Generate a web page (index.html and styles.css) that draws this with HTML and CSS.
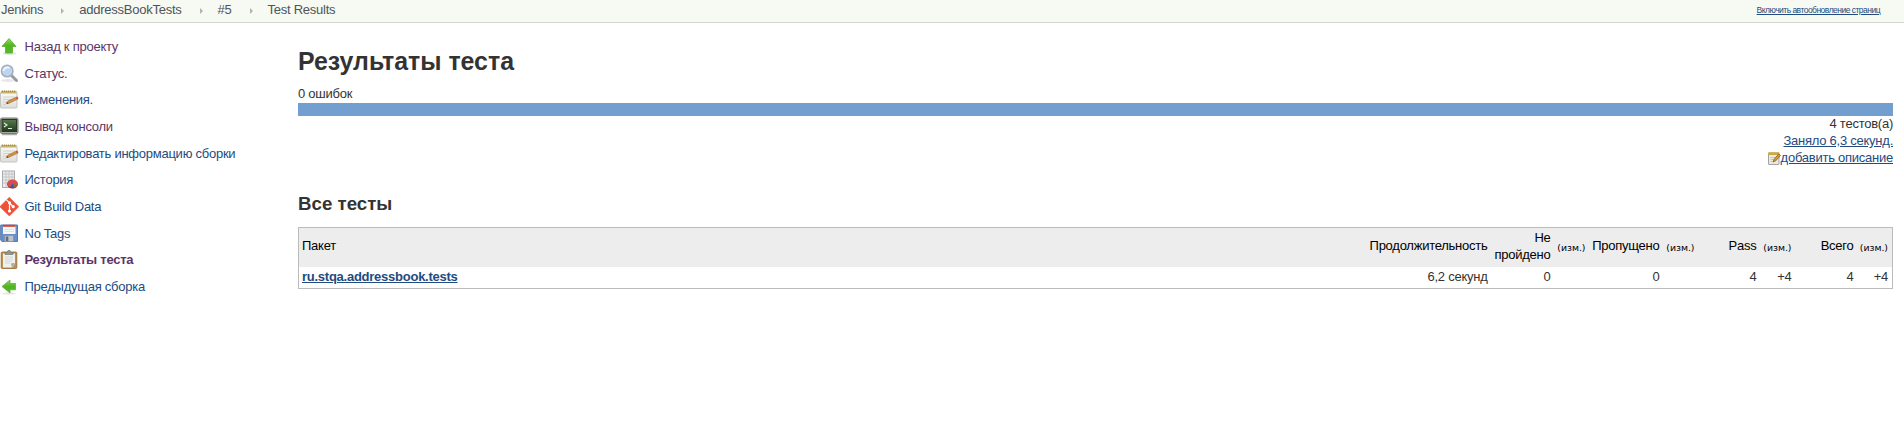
FILE: index.html
```html
<!DOCTYPE html>
<html lang="ru">
<head>
<meta charset="utf-8">
<title>Test Results</title>
<link rel="stylesheet" href="styles.css">
</head>
<body>
<header class="crumbs">
  <nav class="path"><span>Jenkins</span><i></i><span>addressBookTests</span><i></i><span>#5</span><i></i><span>Test Results</span></nav>
  <a class="refresh" href="#">Включить автообновление страниц</a>
</header>
<svg class="defs" width="0" height="0">
  <defs>
    <linearGradient id="green" x2="0" y2="1"><stop stop-color="#8fdc52"/><stop offset=".5" stop-color="#4fb51e"/><stop offset="1" stop-color="#59b92b"/></linearGradient>
    <linearGradient id="screen" x2="0" y2="1"><stop stop-color="#5a7a4c"/><stop offset="1" stop-color="#1f3a1c"/></linearGradient>
    <linearGradient id="paper" x2="0" y2="1"><stop stop-color="#fafaf8"/><stop offset="1" stop-color="#dededb"/></linearGradient>
    <symbol id="note" viewBox="0 0 19 19">
      <rect x=".5" y="2" width="16.500" height="16" rx="1" fill="url(#paper)" stroke="#c4c4c0"/>
      <path d="M1 .8h15.500v2.700H1z" fill="#c9b365"/><path d="M2 1.200h14" stroke="#907b38" stroke-dasharray="1 1"/>
      <path d="M3 7h12M3 9.500h9M3 12h4M3 14.500h3" stroke="#d2d2ce"/>
      <path d="M6.500 13L8 11 16.500 7l1.500 2-9 4.300z" fill="#d39142" stroke="#9f6f3a" stroke-width=".6"/>
      <path d="M15.800 7.300l1.400-.7 1.300 1.700-1.500.9z" fill="#c9564a"/><path d="M6 14l1.500-1.800 1 1.300z" fill="#333"/>
    </symbol>
    <symbol id="edit" viewBox="0 0 13 13">
      <rect x=".5" y="1" width="10.500" height="11.500" rx=".5" fill="#e9e9e6" stroke="#a3a39d"/>
      <path d="M.3.300h11v2.700H.3z" fill="#cfa93c"/>
      <path d="M2.500 5.500h5M2.500 7.500h3M2.500 9.500h2" stroke="#bdbdb8" stroke-width=".8"/>
      <path d="M5 10l1-2.700L10.700 2l1.800 1.500L7.500 9z" fill="#d9992c" stroke="#79531f" stroke-width=".7"/>
    </symbol>
  </defs>
</svg>
<div class="layout">
<aside class="tasks">
  <a class="visited" href="#"><svg viewBox="0 0 19 19"><ellipse cx="9.500" cy="16.500" rx="7" ry="1.500" fill="#e0e5dc"/><path d="M9 1.500L16 9.500h-3.500V16h-7V9.500H2z" fill="url(#green)" stroke="#57ad2b" stroke-width=".8"/></svg><span>Назад к проекту</span></a>
  <a class="visited" href="#"><svg viewBox="0 0 19 19"><ellipse cx="8" cy="16.500" rx="7" ry="1.500" fill="#e7e7e7"/><path d="M11.500 11.500l5 5" stroke="#999ba0" stroke-width="3" stroke-linecap="round"/><circle cx="7.200" cy="7" r="5.800" fill="#bcd5f2" stroke="#a5aebc" stroke-width="1.500"/><path d="M3.500 7a4 4 0 0 1 6-3" stroke="#eef6ff" stroke-width="1.800" fill="none"/></svg><span>Статус.</span></a>
  <a class="raised" href="#"><svg viewBox="0 0 19 19"><use href="#note"/></svg><span>Изменения.</span></a>
  <a class="visited" href="#"><svg viewBox="0 0 19 19"><path d="M2 17.500h15" stroke="#aaa" stroke-width="1.500"/><rect x=".5" y="1" width="17.500" height="15.500" rx="1.500" fill="#a7aaa3" stroke="#777b74"/><rect x="2" y="2.500" width="14.500" height="12" fill="url(#screen)" stroke="#263a23"/><path d="M4 6l3 2-3 2M8 11.500h4" stroke="#e3eee0" fill="none" stroke-width="1.100"/></svg><span>Вывод консоли</span></a>
  <a href="#"><svg viewBox="0 0 19 19"><use href="#note"/></svg><span>Редактировать информацию сборки</span></a>
  <a class="raised" href="#"><svg viewBox="0 0 19 19"><rect x="2.500" y="1" width="12" height="16.500" fill="#ededed" stroke="#aaa"/><path d="M3 4h11M3 7h11M3 10h11M3 13h8M6 1v16M9 1v16M12 1v12" stroke="#bcbcbc" stroke-width=".8"/><ellipse cx="12.500" cy="14.500" rx="5.300" ry="4" fill="#a52c32"/><ellipse cx="12.500" cy="13.500" rx="5.300" ry="4" fill="#df4a4e"/><path d="M12.500 13.500l5.300.5q-.5 3-3.500 4z" fill="#9c6938"/><path d="M12.500 13.500l2 4.500q-2.500.7-4.500-.7z" fill="#315bac"/></svg><span>История</span></a>
  <a href="#"><svg viewBox="0 0 19 19"><path d="M9.300.2L18.800 9.700 9.300 19 -.2 9.700z" fill="#ee5138" stroke="#ee5138" stroke-linejoin="round" stroke-width=".5"/><path d="M6.500 2.800l3 3V14M9.500 6l3.500 3.500" stroke="#fff" stroke-width="1.200" fill="none"/><g fill="#fff"><circle cx="9.500" cy="5.700" r="1.500"/><circle cx="9.500" cy="14" r="1.600"/><circle cx="13.200" cy="9.700" r="1.600"/></g></svg><span>Git Build Data</span></a>
  <a href="#"><svg viewBox="0 0 19 19"><path d="M.7 1h16.800v16.500H2L.7 16z" fill="#688fc9" stroke="#5679b0"/><rect x="3" y="1.500" width="12.500" height="8.500" fill="#f8f8f8"/><path d="M3 .8h12.500v2H3z" fill="#db3e36"/><path d="M4.500 5.500h9.500M4.500 7.500h9.500" stroke="#d8d8d8" stroke-width=".7"/><rect x="4.500" y="11.500" width="9" height="6" fill="#bfc1c2" stroke="#8b9095" stroke-width=".7"/><rect x="5.800" y="12.500" width="2.500" height="4.500" fill="#5a6f8b"/></svg><span>No Tags</span></a>
  <a class="visited current" href="#"><svg viewBox="0 0 19 19"><rect x="1.200" y="2" width="15.600" height="16.500" rx="1" fill="#c0924d" stroke="#8f6933" stroke-width=".8"/><path d="M3 3.500h12v10L12 17.500H3z" fill="#f0f0ee"/><path d="M15 13l-4 .3.800 4.200z" fill="#aaa"/><path d="M5 7h8M5 9h8M5 11h7M5 13h5" stroke="#d0d0d0" stroke-width=".8"/><path d="M5 4.500V2.500h2L8 .5h2l1 2h2v2z" fill="#93968f" stroke="#6d706a" stroke-width=".6"/></svg><span>Результаты теста</span></a>
  <a href="#"><svg viewBox="0 0 19 19"><ellipse cx="9" cy="16.500" rx="7" ry="1.200" fill="#e5e8e2"/><path d="M2 9.500L10 3v3.500h5.500v6.300H10V16z" fill="url(#green)" stroke="#68a750" stroke-width=".8"/></svg><span>Предыдущая сборка</span></a>
</aside>
<main class="main">
  <h1>Результаты теста</h1>
  <div class="failures">0 ошибок</div>
  <div class="bar"></div>
  <div class="summary">
    <div>4 тестов(а)</div>
    <div><a href="#">Заняло 6,3 секунд.</a></div>
    <div class="describe"><svg viewBox="0 0 13 13"><use href="#edit"/></svg><a href="#">добавить описание</a></div>
  </div>
  <h2>Все тесты</h2>
  <table class="results">
    <colgroup><col><col class="w-duration"><col class="w-fail"><col class="w-diff"><col class="w-skip"><col class="w-diff"><col class="w-num"><col class="w-diff"><col class="w-num"><col class="w-diff"></colgroup>
    <thead><tr><th class="name">Пакет</th><th>Продолжительность</th><th>Не пройдено</th><th class="diff">(изм.)</th><th>Пропущено</th><th class="diff">(изм.)</th><th>Pass</th><th class="diff">(изм.)</th><th>Всего</th><th class="diff">(изм.)</th></tr></thead>
    <tbody><tr><td class="name"><a href="#">ru.stqa.addressbook.tests</a></td><td>6,2 секунд</td><td>0</td><td></td><td>0</td><td></td><td>4</td><td>+4</td><td>4</td><td>+4</td></tr></tbody>
  </table>
</main>
</div>
</body>
</html>
```
FILE: styles.css
```css
* { box-sizing: border-box; }
body { margin: 0; background: #fff; color: #333; font: 13px/17px "Liberation Sans", Arial, sans-serif; letter-spacing: -.25px; }
a { color: #234b80; }
.defs { display: block; }
.crumbs { height: 23px; background: #f6faf2; border-bottom: 1px solid #d3d7cf; display: flex; justify-content: space-between; padding: 1px 24px 0 1px; color: #4d545d; }
.path { display: flex; }
.path i { width: 36px; padding: 7px 0 0 18px; }
.path i::before { content: ""; display: block; width: 0; border: solid transparent; border-width: 3px 0 3px 3px; border-left-color: #b0b4ae; }
.refresh { font-size: 8.500px; line-height: 18px; letter-spacing: -.52px; }
.layout { display: flex; }
.tasks { width: 298px; padding-top: 11px; flex: none; }
.tasks a { display: flex; align-items: center; height: 26.650px; gap: 5.500px; padding-bottom: 1px; text-decoration: none; white-space: nowrap; }
.tasks .raised { padding-bottom: 2.500px; }
.tasks svg { width: 19px; height: 19px; }
.tasks .visited { color: #5c3566; }
.tasks .current { font-weight: bold; }
.main { flex: 1; padding-right: 11px; }
h1 { margin: 22px 0 8px; font-size: 24.900px; line-height: 33px; letter-spacing: 0; }
.failures { height: 17px; line-height: 15px; }
.bar { height: 13px; background: #729fcf; }
.summary { text-align: right; margin-top: -1px; }
.summary > div { height: 17px; }
.describe { display: flex; justify-content: flex-end; }
.describe svg { width: 13px; height: 13px; margin-top: 3px; }
h2 { margin: 27px 0 12px; font-size: 18.700px; line-height: 22px; letter-spacing: 0; }
.results { width: 100%; table-layout: fixed; border-collapse: collapse; border: 1px solid #bbb; }
.results th { height: 39px; padding: 0 4px 3px 1px; background: #ededed; color: #000; font-weight: normal; text-align: right; }
.results td { height: 22px; padding: 0 4px 1px; text-align: right; }
.results .name { text-align: left; padding-left: 3px; }
.results .name a { font-weight: bold; }
.results .diff { font: 9.300px/17px "DejaVu Sans", sans-serif; letter-spacing: 0; padding: 0 4px 0 0; white-space: nowrap; }
.w-duration { width: 125px; }
.w-fail { width: 63px; }
.w-diff { width: 35px; }
.w-skip { width: 74px; }
.w-num { width: 62px; }
```
